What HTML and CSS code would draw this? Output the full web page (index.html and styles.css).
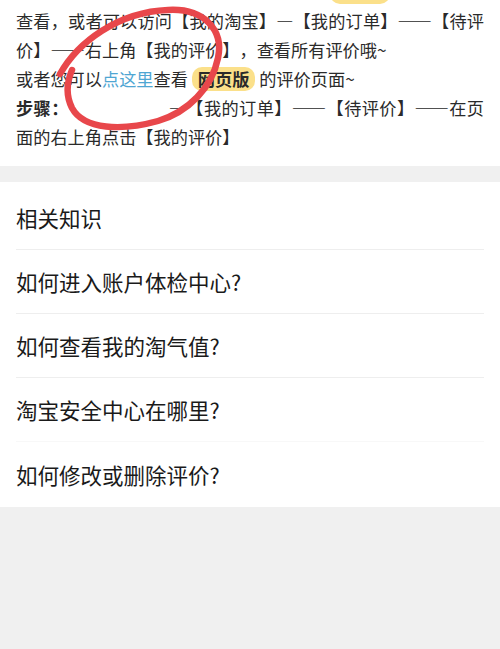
FILE: index.html
```html
<!DOCTYPE html>
<html lang="zh-CN">
<head>
    <meta charset="UTF-8">
    <meta name="viewport" content="width=device-width, initial-scale=1.0">
    <title>评价帮助</title>
    <link rel="stylesheet" href="styles.css">
</head>
<body>

    <div class="answer">
        <div class="text">
            <p class="prev"><span class="pill"></span></p>
            <p>查看，或者可以访问【我的淘宝】—【我的订单】——【待评价】——右上角【我的评价】，查看所有评价哦~</p>
            <p>或者您可以<a class="link" href="#">点这里</a>查看 <span class="tag">网页版</span> 的评价页面~</p>
            <p><b>步骤：</b><span class="blank"></span>—【我的订单】——【待评价】——在页面的右上角点击【我的评价】</p>
        </div>
        <svg class="circle" width="240" height="140" viewBox="0 0 240 140">
            <path d="M60 74 C78 42 118 12 168 10 C204 8 224 30 218 58 C212 88 188 112 158 121 C122 131 84 130 72 108 C66 96 66 84 72 70"
                  fill="none" stroke="#e8474b" stroke-width="6.5" stroke-linecap="round"/>
        </svg>
    </div>

    <div class="related">
        <div class="row head">相关知识</div>
        <div class="row">如何进入账户体检中心?</div>
        <div class="row">如何查看我的淘气值?</div>
        <div class="row faint">淘宝安全中心在哪里?</div>
        <div class="row faint last">如何修改或删除评价?</div>
    </div>

</body>
</html>
```

FILE: styles.css
```css
/* 页面整体 */
body {
    margin: 0;
    background: #f0f0f0;
    font-family: "Noto Sans CJK SC", "Noto Sans", sans-serif;
    color: #222;
}

/* 上方回答卡片 */
.answer {
    position: relative;
    background: #fff;
    overflow: hidden;
    height: 166px;
}

.text {
    margin-top: -23px;
    padding: 0 16px;
    font-size: 17.2px;
    line-height: 29px;
    color: #2a2a2a;
    text-spacing-trim: space-all;
}

.text p {
    margin: 0;
    text-align: justify;
}

.prev {
    height: 29px;
    display: flex;
    align-items: center;
}

/* 上一行被截掉的高亮 */
.pill {
    width: 60px;
    height: 24px;
    margin-left: 314px;
    background: #fbe08a;
    border-radius: 10px;
}

.link {
    color: #4fa6d3;
    text-decoration: none;
}

.tag {
    display: inline-block;
    background: #fbe08a;
    border-radius: 10px;
    padding: 0 6px;
    line-height: 24px;
    font-weight: bold;
}

/* 被涂掉的一段 */
.blank {
    display: inline-block;
    width: 100px;
}

/* 红色圈注 */
.circle {
    position: absolute;
    left: 0;
    top: 0;
}

/* 相关知识列表 */
.related {
    margin-top: 16px;
    background: #fff;
    padding: 0 16px;
}

.row {
    height: 63px;
    display: flex;
    align-items: center;
    font-size: 21.5px;
    color: #1a1a1a;
    border-bottom: 1px solid #eeeeee;
}

.row.head {
    height: 63px;
    padding-top: 4px;
}

.row.faint {
    border-bottom-color: #f8f8f8;
}

.row.last {
    border-bottom: none;
    height: 65px;
}
```
